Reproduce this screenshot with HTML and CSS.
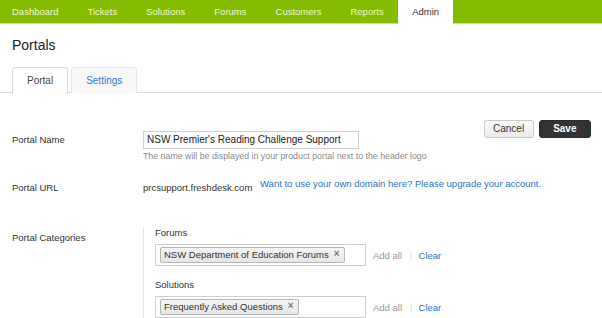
FILE: index.html
```html
<!DOCTYPE html>
<html>
<head>
<meta charset="utf-8">
<link rel="stylesheet" href="styles.css">
</head>
<body>
<nav class="nav">
  <a class="nav-item first">Dashboard</a>
  <a class="nav-item">Tickets</a>
  <a class="nav-item">Solutions</a>
  <a class="nav-item">Forums</a>
  <a class="nav-item">Customers</a>
  <a class="nav-item">Reports</a>
  <a class="nav-item active">Admin</a>
</nav>
<h1 class="title">Portals</h1>
<div class="tabs">
  <div class="tab active">Portal</div>
  <div class="tab">Settings</div>
</div>
<div class="form">
  <div class="row row-name">
    <div class="label">Portal Name</div>
    <div class="field">
      <div class="input">NSW Premier's Reading Challenge Support</div>
      <div class="help">The name will be displayed in your product portal next to the header logo</div>
    </div>
    <div class="actions">
      <button class="btn">Cancel</button>
      <button class="btn btn-dark">Save</button>
    </div>
  </div>
  <div class="row row-url">
    <div class="label">Portal URL</div>
    <div class="url">prcsupport.freshdesk.com</div>
    <a class="link">Want to use your own domain here? Please upgrade your account.</a>
  </div>
  <div class="row row-cat">
    <div class="label">Portal Categories</div>
    <div class="cat-field">
      <div class="cat-title">Forums</div>
      <div class="cat-line">
        <div class="select"><span class="tag">NSW Department of Education Forums<span class="x">×</span></span></div>
        <span class="add">Add all</span><span class="sep">|</span><a class="clear">Clear</a>
      </div>
      <div class="cat-title second">Solutions</div>
      <div class="cat-line">
        <div class="select"><span class="tag">Frequently Asked Questions<span class="x">×</span></span></div>
        <span class="add">Add all</span><span class="sep">|</span><a class="clear">Clear</a>
      </div>
    </div>
  </div>
</div>
</body>
</html>
```
FILE: styles.css
```css
* { box-sizing: border-box; }
body {
  margin: 0;
  font-family: "Liberation Sans", Arial, sans-serif;
  font-size: 9.5px;
  color: #333;
  background: #fff;
}
.nav {
  display: flex;
  height: 24px;
  background: #84bd00;
  border-bottom: 1px solid #c9e38f;
}
.nav-item {
  padding: 0 14.5px;
  line-height: 23px;
  color: #eef6dd;
}
.nav-item.first { padding-left: 12px; }
.nav-item.active {
  background: #fff;
  color: #333;
  padding: 0 14px;
  height: 24px;
  margin-bottom: -1px;
}
.title {
  margin: 13px 0 0 12px;
  font-size: 14px;
  font-weight: normal;
  line-height: 17px;
  color: #222;
}
.tabs {
  display: flex;
  gap: 3px;
  margin-top: 13px;
  padding-left: 12px;
  border-bottom: 1px solid #dedede;
  height: 26px;
}
.tab {
  height: 26px;
  padding: 0 14px;
  line-height: 25px;
  font-size: 10px;
  color: #2d7bd0;
  background: #f8f8f8;
  border: 1px solid #e9e9e9;
  border-bottom: none;
  border-radius: 3px 3px 0 0;
}
.tab.active {
  background: #fff;
  color: #444;
  border-color: #dcdcdc;
  height: 27px;
}
.form {
  padding: 27px 11px 0 12px;
}
.row { display: flex; align-items: flex-start; }
.label { width: 131px; flex: none; }
.row-name .label { margin-top: 11px; line-height: 18px; }
.row-name .field { margin-top: 11px; }
.input {
  width: 216px;
  height: 18px;
  border: 1px solid #cfcfcf;
  padding: 0 3px;
  line-height: 16px;
  font-size: 10px;
  color: #222;
}
.help {
  margin-top: 1px;
  line-height: 12px;
  font-size: 8.8px;
  color: #8a8a8a;
}
.actions {
  margin-left: auto;
  display: flex;
  gap: 5px;
}
.btn {
  height: 18px;
  padding: 0 8.5px;
  font-family: inherit;
  font-size: 10px;
  color: #333;
  background: linear-gradient(#fafafa, #ececec);
  border: 1px solid #c8c8c8;
  border-radius: 3px;
  line-height: 16px;
}
.btn-dark {
  padding: 0 13.5px;
  background: #333;
  border-color: #2a2a2a;
  color: #fff;
  font-weight: bold;
}
.row-url { margin-top: 16px; }
.row-url .label, .url {
  padding-top: 4px;
  line-height: 12px;
}
.url { width: 117px; }
.link {
  line-height: 12px;
  color: #2a73c9;
}
.row-cat { margin-top: 33px; }
.row-cat .label { padding-top: 5px; line-height: 12px; }
.cat-field {
  border-left: 1px solid #e6e6e6;
  padding-left: 11px;
  padding-bottom: 40px;
}
.cat-title { line-height: 12px; margin-bottom: 5px; }
.cat-title.second { margin-top: 13px; }
.cat-line {
  display: flex;
  align-items: center;
}
.select {
  width: 211px;
  height: 22px;
  border: 1px solid #cfcfcf;
  padding: 2px 4px;
  display: flex;
  align-items: flex-start;
  margin-right: 7px;
}
.tag {
  display: inline-flex;
  align-items: center;
  height: 16px;
  padding: 0 4px 0 3px;
  background: linear-gradient(#f4f4f4, #e6e6e6);
  border: 1px solid #b5b5b5;
  border-radius: 2px;
  color: #333;
  line-height: 14px;
}
.x {
  margin-left: 5px;
  margin-top: -3px;
  font-size: 10px;
  color: #777;
  font-weight: bold;
}
.add { color: #999; }
.sep { color: #ddd; margin: 0 6px 0 8px; }
.clear { color: #2a73c9; }
```
